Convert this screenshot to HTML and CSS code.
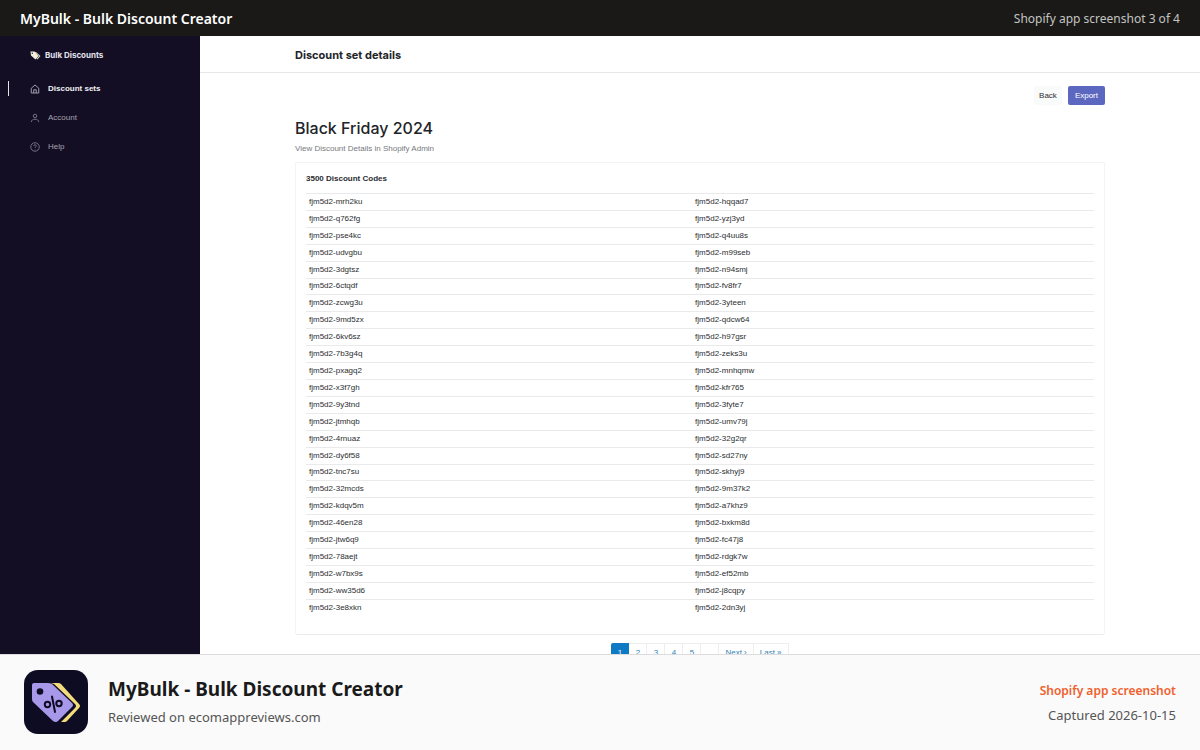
FILE: index.html
```html
<!DOCTYPE html>
<html lang="en">
<head>
  <meta charset="utf-8">
  <title>MyBulk - Bulk Discount Creator</title>
  <link rel="stylesheet" href="styles.css">
</head>
<body>
  <header class="topbar">
    <span class="topbar-title">MyBulk - Bulk Discount Creator</span>
    <span class="topbar-count">Shopify app screenshot 3 of 4</span>
  </header>

  <div class="app">
    <nav class="sidebar">
      <div class="brand">
        <svg class="brand-icon" viewBox="0 0 22 18">
          <path d="M9 2l3 0 9 8-6 7-2-1 5-6z" fill="#d9d6c4"/>
          <path d="M1 1l8 0 8 9-6 7-9-8z" fill="#f4f1dc"/>
          <circle cx="4.5" cy="4.5" r="1.4" fill="#151024"/>
        </svg>
        <span>Bulk Discounts</span>
      </div>
      <a class="nav-link active" href="#">
        <svg class="nav-icon" viewBox="0 0 20 20">
          <path d="M2.5 8.5L10 2l7.500 6.500V18h-15z M7.500 18v-6.500h5V18"/>
        </svg>
        <span>Discount sets</span>
      </a>
      <a class="nav-link" href="#">
        <svg class="nav-icon" viewBox="0 0 20 20">
          <circle cx="10" cy="6" r="3.500"/>
          <path d="M2.500 18c.5-4 3.500-5.500 7.500-5.500s7 1.500 7.500 5.500"/>
        </svg>
        <span>Account</span>
      </a>
      <a class="nav-link" href="#">
        <svg class="nav-icon" viewBox="0 0 20 20">
          <circle cx="10" cy="10" r="8.500"/>
          <path d="M7.500 8a2.500 2.500 0 1 1 3.500 2.300c-.8.400-1 .8-1 1.700M10 14v1"/>
        </svg>
        <span>Help</span>
      </a>
    </nav>

    <main class="main">
      <div class="page-header">
        <h2 class="page-title">Discount set details</h2>
      </div>
      <div class="content">
        <div class="actions">
          <button type="button" class="btn">Back</button>
          <button type="button" class="btn btn-primary">Export</button>
        </div>
        <h1 class="set-name">Black Friday 2024</h1>
        <a class="admin-link" href="#">View Discount Details in Shopify Admin</a>

        <section class="card">
          <h3 class="card-title">3500 Discount Codes</h3>
          <table class="codes">
            <tbody>
              <tr><td>fjm5d2-mrh2ku</td><td>fjm5d2-hqqad7</td></tr>
              <tr><td>fjm5d2-q762fg</td><td>fjm5d2-yzj3yd</td></tr>
              <tr><td>fjm5d2-pse4kc</td><td>fjm5d2-q4uu8s</td></tr>
              <tr><td>fjm5d2-udvgbu</td><td>fjm5d2-m99seb</td></tr>
              <tr><td>fjm5d2-3dgtsz</td><td>fjm5d2-n94smj</td></tr>
              <tr><td>fjm5d2-6ctqdf</td><td>fjm5d2-fv8fr7</td></tr>
              <tr><td>fjm5d2-zcwg3u</td><td>fjm5d2-3yteen</td></tr>
              <tr><td>fjm5d2-9md5zx</td><td>fjm5d2-qdcw64</td></tr>
              <tr><td>fjm5d2-6kv6sz</td><td>fjm5d2-h97gsr</td></tr>
              <tr><td>fjm5d2-7b3g4q</td><td>fjm5d2-zeks3u</td></tr>
              <tr><td>fjm5d2-pxagq2</td><td>fjm5d2-mnhqmw</td></tr>
              <tr><td>fjm5d2-x3f7gh</td><td>fjm5d2-kfr765</td></tr>
              <tr><td>fjm5d2-9y3tnd</td><td>fjm5d2-3fyte7</td></tr>
              <tr><td>fjm5d2-jtmhqb</td><td>fjm5d2-umv79j</td></tr>
              <tr><td>fjm5d2-4rnuaz</td><td>fjm5d2-32g2qr</td></tr>
              <tr><td>fjm5d2-dy6f58</td><td>fjm5d2-sd27ny</td></tr>
              <tr><td>fjm5d2-tnc7su</td><td>fjm5d2-skhyj9</td></tr>
              <tr><td>fjm5d2-32mcds</td><td>fjm5d2-9m37k2</td></tr>
              <tr><td>fjm5d2-kdqv5m</td><td>fjm5d2-a7khz9</td></tr>
              <tr><td>fjm5d2-46en28</td><td>fjm5d2-bxkm8d</td></tr>
              <tr><td>fjm5d2-jtw6q9</td><td>fjm5d2-fc47j8</td></tr>
              <tr><td>fjm5d2-78aejt</td><td>fjm5d2-rdgk7w</td></tr>
              <tr><td>fjm5d2-w7bx9s</td><td>fjm5d2-ef52mb</td></tr>
              <tr><td>fjm5d2-ww35d6</td><td>fjm5d2-j8cqpy</td></tr>
              <tr><td>fjm5d2-3e8xkn</td><td>fjm5d2-2dn3yj</td></tr>
            </tbody>
          </table>
        </section>

        <div class="pagination">
          <a class="page current" href="#">1</a>
          <a class="page" href="#">2</a>
          <a class="page" href="#">3</a>
          <a class="page" href="#">4</a>
          <a class="page" href="#">5</a>
          <span class="page"></span>
          <a class="page" href="#">Next ›</a>
          <a class="page" href="#">Last »</a>
        </div>
      </div>
    </main>
  </div>

  <footer class="footer">
    <svg class="app-logo" viewBox="0 0 64 64">
      <rect width="64" height="64" rx="14" fill="#0e0c22"/>
      <path d="M27 13h7q2 0 3 1l18 20q2 2 0 4L43 51q-1 1-2 1h-4l14-14q2-2 0-4L30 14z" fill="#f2dc7c"/>
      <path d="M10 13h14q2 0 4 1l20 19q2 2 0 4L34 51q-2 2-5 0L9 32q-1-1-1-3V15q0-2 2-2z" fill="#a898ea"/>
      <circle cx="16" cy="21.500" r="3.300" fill="#0e0c22"/>
      <g fill="none" stroke="#0e0c22" stroke-width="2">
        <circle cx="23.500" cy="34.500" r="2.700"/>
        <circle cx="35" cy="33.500" r="2.700"/>
        <path d="M28 26.500l3 15.500" stroke-linecap="round"/>
      </g>
    </svg>
    <div class="footer-info">
      <div class="footer-name">MyBulk - Bulk Discount Creator</div>
      <div class="footer-text">Reviewed on ecomappreviews.com</div>
    </div>
    <div class="footer-meta">
      <div class="footer-label">Shopify app screenshot</div>
      <div class="footer-text">Captured 2026-10-15</div>
    </div>
  </footer>
</body>
</html>
```
FILE: styles.css
```css
* {
  box-sizing: border-box;
}

body {
  margin: 0;
  height: 100vh;
  display: flex;
  flex-direction: column;
  overflow: hidden;
  font-family: "Noto Sans", sans-serif;
  font-size: 13px;
  color: #1a1a1a;
  background: #fafafa;
}

h1, h2, h3 {
  margin: 0;
}

a {
  color: inherit;
  text-decoration: none;
}

.topbar {
  flex: none;
  display: flex;
  align-items: center;
  justify-content: space-between;
  height: 36px;
  padding: 0 20px;
  background: #1a1917;
  color: #fff;
}

.topbar-title {
  font-size: 14px;
  font-weight: 600;
}

.topbar-count {
  font-size: 12px;
  color: #c4c4c2;
}

/* app window */
.app {
  flex: 1;
  min-height: 0;
  display: flex;
  overflow: hidden;
  background: #fff;
  font-family: "Liberation Sans", Arial, sans-serif;
  font-size: 8px;
}

.sidebar {
  flex: none;
  width: 200px;
  padding-top: 9px;
  background: #130e24;
  color: #a5a2b0;
}

.brand {
  display: flex;
  align-items: center;
  gap: 4px;
  height: 20px;
  margin-bottom: 9px;
  padding-left: 30px;
  font-family: Inter, sans-serif;
  font-weight: 700;
  color: #e4e2ec;
}

.brand-icon {
  width: 11px;
  height: 9px;
}

.nav-link {
  display: flex;
  align-items: center;
  gap: 8px;
  height: 29px;
  padding-left: 30px;
}

.nav-link.active {
  font-weight: 700;
  color: #f0eff5;
}

.nav-link.active::before {
  content: "";
  width: 1px;
  height: 15px;
  margin: 0 13px 0 -22px;
  background: #e4e2ec;
}

.nav-icon {
  width: 10px;
  height: 10px;
  fill: none;
  stroke: #75718a;
  stroke-width: 2;
}

.active .nav-icon {
  stroke: #9f9cae;
}

.main {
  flex: 1;
  min-width: 0;
}

.page-header {
  height: 37px;
  border-bottom: 1px solid #e6e6e8;
}

.page-title,
.content {
  max-width: 810px;
  margin: 0 auto;
}

.page-title {
  font-family: Inter, sans-serif;
  font-size: 11px;
  font-weight: 700;
  line-height: 38px;
  color: #222427;
}

.content {
  padding-top: 13px;
}

.actions {
  display: flex;
  justify-content: flex-end;
  gap: 6px;
}

.btn {
  height: 19px;
  padding: 0 5px;
  border: 0;
  border-radius: 2px;
  background: #f9fafa;
  color: #2b2d30;
  font-family: inherit;
  font-size: 8px;
}

.btn-primary {
  padding: 0 7px;
  background: #5c68c0;
  color: #fff;
}

.set-name {
  margin-top: 11px;
  font-family: Inter, sans-serif;
  font-size: 16px;
  font-weight: 500;
  line-height: 24px;
  color: #222427;
}

.admin-link {
  display: block;
  margin-top: 3px;
  line-height: 12px;
  color: #76797d;
}

.card {
  margin-top: 7px;
  padding: 10px 10px 18px;
  border: 1px solid #f3f4f5;
  border-bottom-color: #ebecee;
  border-radius: 2px;
}

.card-title {
  margin-bottom: 8px;
  font-size: 8px;
  font-weight: 700;
  line-height: 12px;
  color: #2b2d30;
}

.codes {
  width: 100%;
  height: 423px;
  table-layout: fixed;
  border-spacing: 0;
  color: #2b2d30;
}

.codes td {
  padding: 0 3px;
  border-top: 1px solid #e8eaec;
  line-height: 12px;
}

.codes td:first-child {
  width: 49%;
}

.pagination {
  display: flex;
  justify-content: center;
  margin-top: 8px;
}

.page {
  min-width: 18px;
  height: 19px;
  padding: 0 6px;
  border: 1px solid #eceef0;
  border-left-width: 0;
  line-height: 17px;
  text-align: center;
  color: #2f7fb5;
}

.page.current {
  border-color: #0f7ac4;
  border-radius: 2px 0 0 2px;
  background: #0f7ac4;
  color: #fff;
}

/* caption strip */
.footer {
  flex: none;
  display: flex;
  align-items: center;
  gap: 20px;
  height: 96px;
  padding: 0 24px 2px;
  border-top: 1px solid #dcdcdc;
  background: #fafafa;
}

.app-logo {
  width: 64px;
  height: 64px;
}

.footer-info {
  flex: 1;
}

.footer-name {
  margin-bottom: 2px;
  font-size: 19px;
  font-weight: 700;
  line-height: 28px;
}

.footer-text {
  line-height: 24px;
  color: #555;
}

.footer-meta {
  padding-top: 2px;
  text-align: right;
}

.footer-label {
  font-size: 12px;
  line-height: 24px;
  font-weight: 600;
  color: #f0602c;
}
```
